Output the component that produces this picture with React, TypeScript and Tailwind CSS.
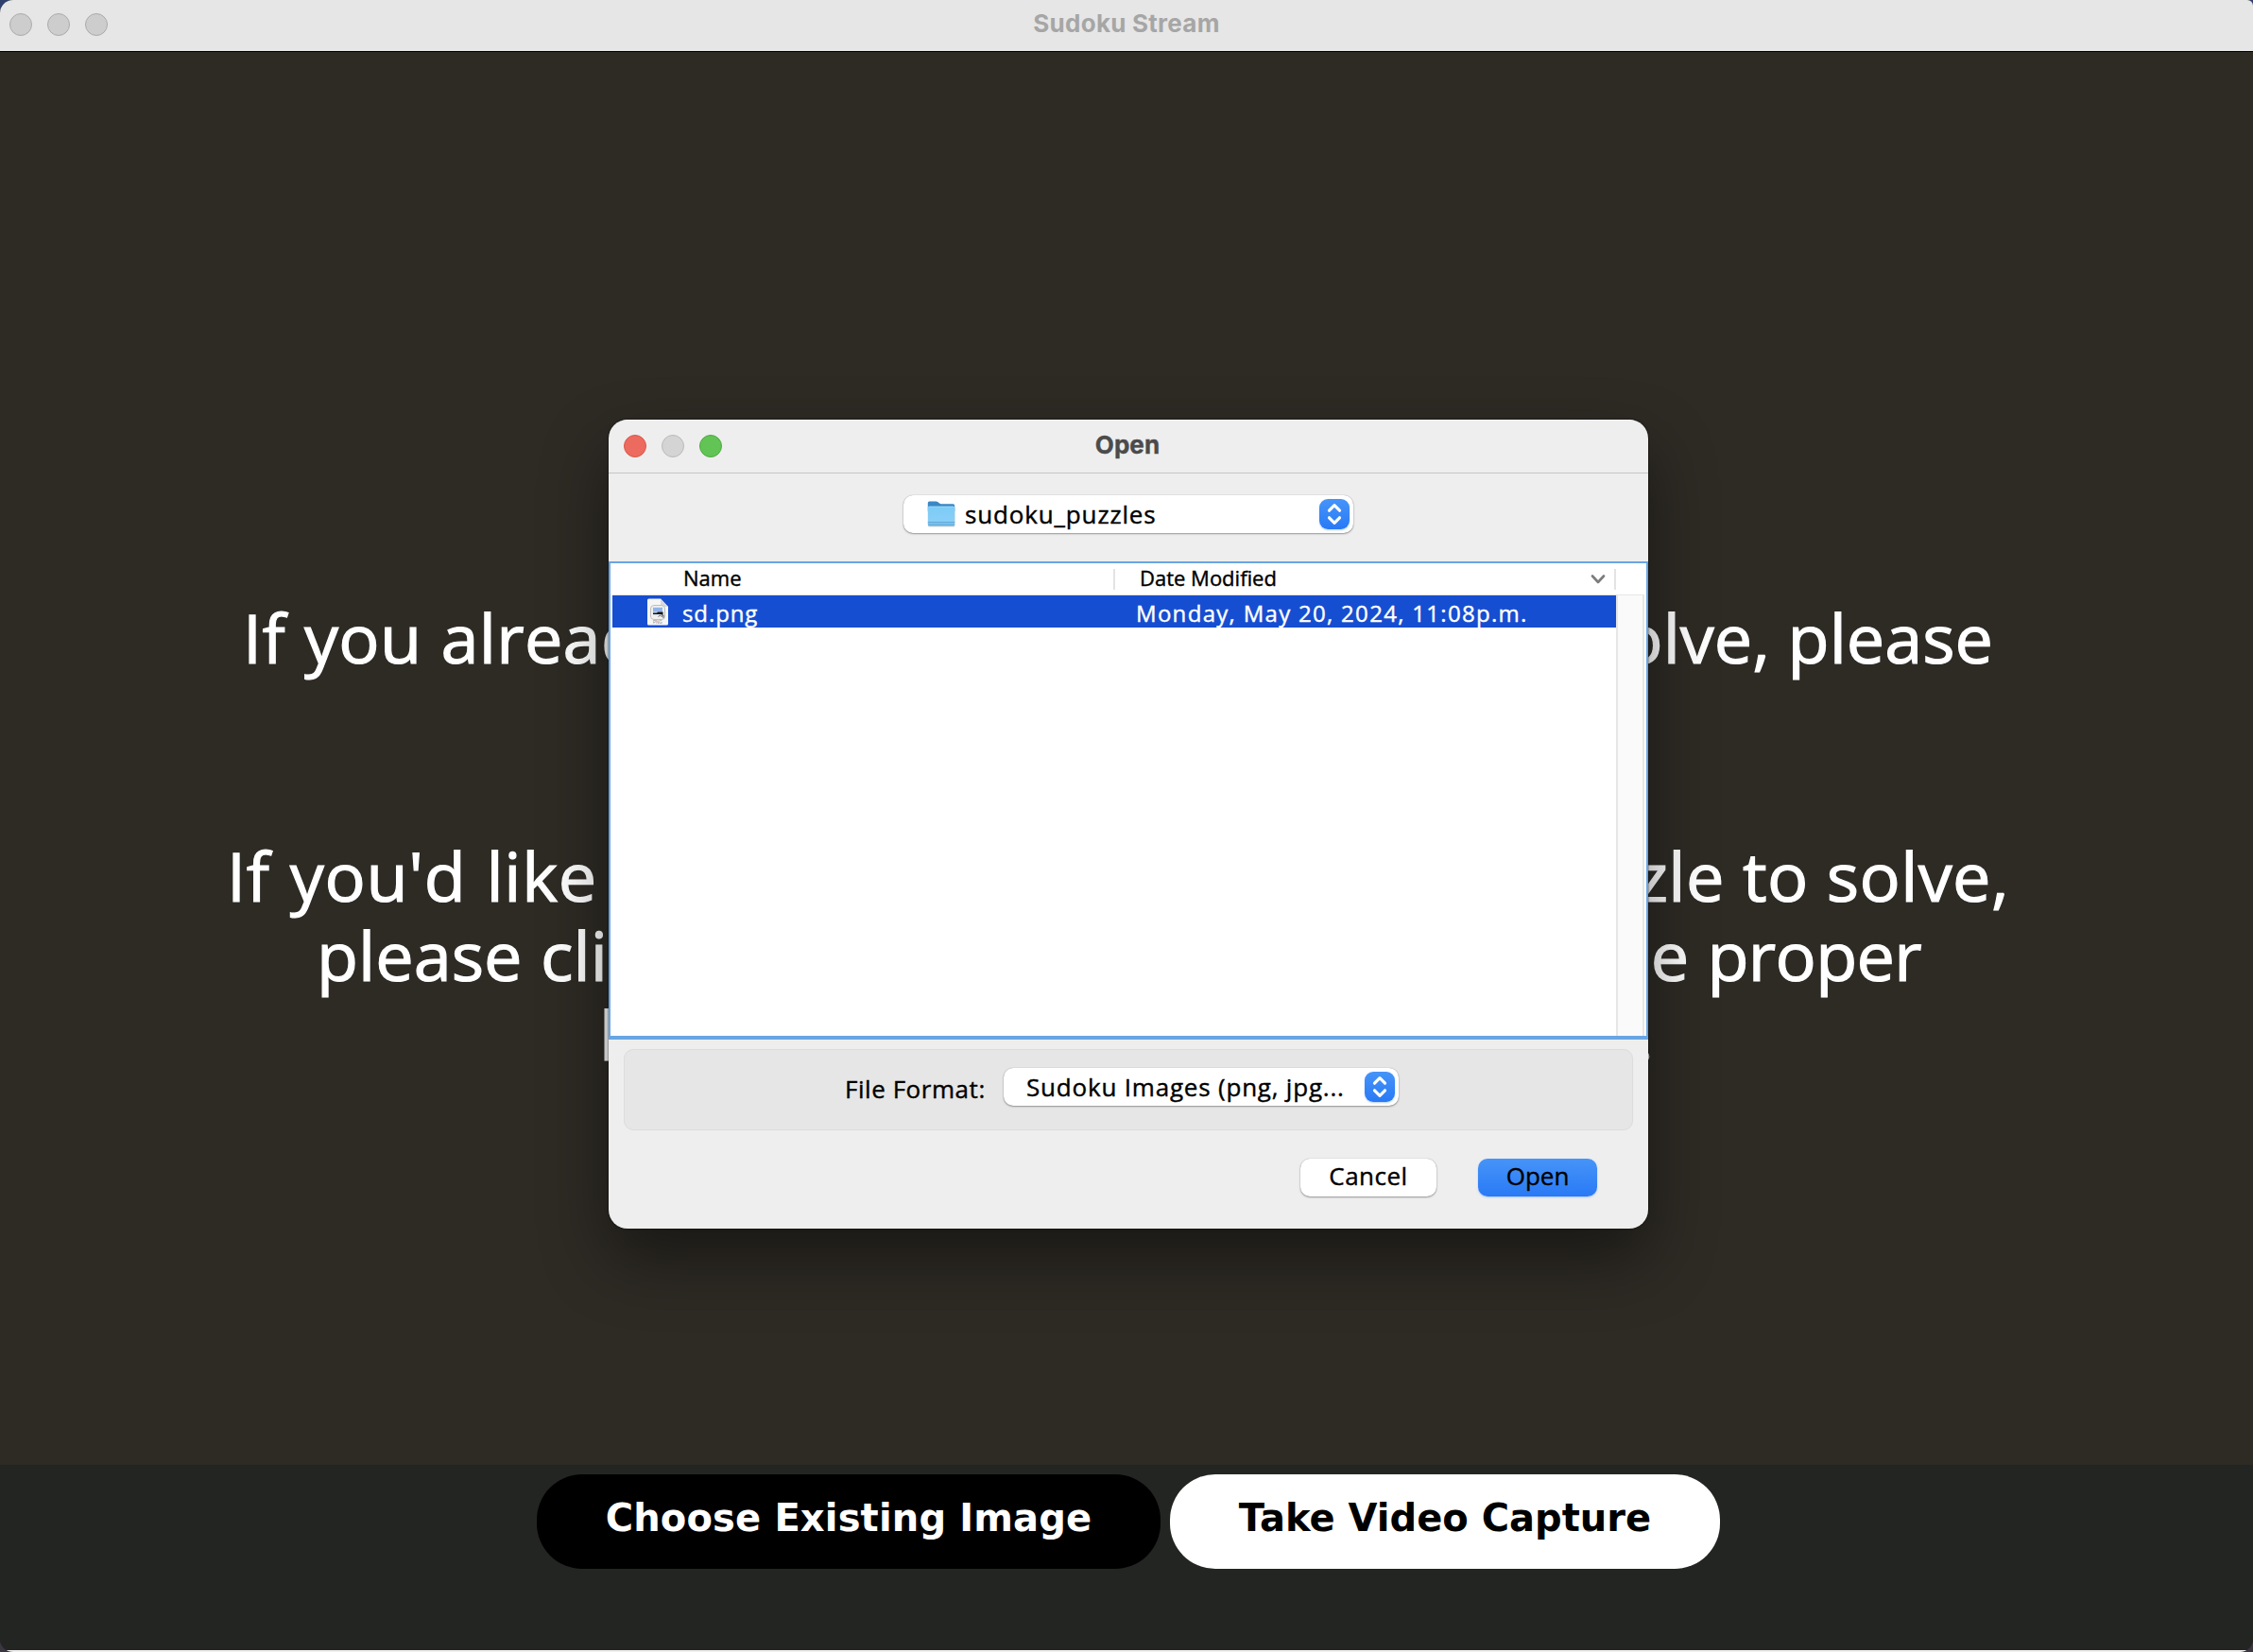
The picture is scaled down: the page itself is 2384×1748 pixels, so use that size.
function Light({ className }: { className: string }) {
  return <span className={`size-6 shrink-0 rounded-full border ${className}`} />;
}

function Knob() {
  return (
    <span className="size-8 shrink-0 rounded-[9px] bg-linear-to-b from-[#4694f8] to-[#2979f6] shadow-[0_1px_2px_rgba(41,121,246,0.35)]">
      <svg viewBox="0 0 32 32" className="size-8" fill="none" stroke="white" strokeWidth="3.2" strokeLinecap="round" strokeLinejoin="round">
        <path d="M10.5 12.2 16 6.7l5.5 5.5M10.5 19.8 16 25.3l5.5-5.5" />
      </svg>
    </span>
  );
}

function FolderIcon() {
  return (
    <svg viewBox="0 0 30 30" className="size-[30px] shrink-0">
      <defs>
        <linearGradient id="folderFront" x1="0" y1="0" x2="0" y2="1">
          <stop offset="0" stopColor="#7ccbf5" />
          <stop offset="0.8" stopColor="#88cff8" />
          <stop offset="1" stopColor="#5fa9d8" />
        </linearGradient>
      </defs>
      <rect x="1" y="8" width="28.6" height="20.6" rx="1.5" fill="#000" opacity="0.15" />
      <path d="M.8 3.2Q.8 1.4 2.4 1.4h7q1 0 1.7.6l2 1.6q.8.6 1.8.6h12.5q1.8 0 1.8 1.8V12H.8z" fill="#3a87c4" />
      <rect x=".8" y="6.8" width="28.4" height="20.6" rx="1.5" fill="url(#folderFront)" />
      <path d="M.8 23.5h28.4" stroke="#5a9fce" strokeWidth=".8" />
      <path d="M1.5 7.2h27" stroke="#9fdcfb" strokeWidth=".8" />
    </svg>
  );
}

function PngIcon() {
  return (
    <svg viewBox="0 0 24 30" className="h-[30px] w-6 shrink-0">
      <path d="M1 3q0-1.500 1.500-1.500H15l8 8.500v18q0 1.500-1.500 1.500h-19Q1 29.500 1 28z" fill="#f6f6f6" />
      <path d="M15 1.500V8.500q0 1.500 1.500 1.500H23z" fill="#d9d9d9" />
      <rect x="4.500" y="8.500" width="15" height="15" rx="3.500" fill="#f0f0f0" stroke="#b9b9b9" strokeWidth="0.9" />
      <rect x="7" y="10.8" width="10" height="8.2" fill="#8fb4e8" />
      <rect x="7" y="15.500" width="10" height="4.3" fill="#dfe6ee" />
      <path d="M7 16.500h4l1-1h5.500v3.500l-2.500-1H7z" fill="#101418" />
      <path d="M12.500 20.500l2-1.500 1.500 1.500 2-1.500v3" fill="none" stroke="#555" strokeWidth="0.9" />
      <text x="12" y="28" textAnchor="middle" fontSize="4.5" strokeWidth="0" fill="#8a8a8a" fontFamily="Liberation Sans, sans-serif">PNG</text>
    </svg>
  );
}

function Select({ className, children }: { className: string; children: React.ReactNode }) {
  return (
    <div className={`flex h-10 items-center justify-between rounded-[10px] bg-white pr-1 shadow-[0_0_1px_rgba(0,0,0,0.35),0_1px_2px_rgba(0,0,0,0.35)] ${className}`}>
      {children}
      <Knob />
    </div>
  );
}

function OpenDialog() {
  return (
    <section className="absolute left-[644px] top-[444px] flex h-[856px] w-[1100px] flex-col overflow-hidden rounded-[20px] bg-[#eeeeee] text-[26px] text-black shadow-[0_0_2px_rgba(0,0,0,0.8),0_32px_70px_rgba(0,0,0,0.45)] [-webkit-text-stroke:0.4px_currentColor]">
      <header className="grid h-14 shrink-0 grid-cols-[1fr_auto_1fr] items-center border-t border-white/80 pb-px">
        <div className="flex gap-4 pl-4">
          <Light className="border-[#d9574c] bg-[#ed6a5e]" />
          <Light className="border-[#b9b9b9] bg-[#d4d4d4]" />
          <Light className="border-[#51a843] bg-[#61c454]" />
        </div>
        <h2 className="pb-[3px] pr-[2px] font-['Inter',sans-serif] text-[26px] font-bold tracking-[0.1px] text-[#4b4b4b]">Open</h2>
      </header>
      <div className="flex h-[94px] shrink-0 justify-center border-t border-[#c6c6c6] pt-[23px]">
        <Select className="w-[476px] pl-[25px]">
          <span className="flex items-center gap-2.5">
            <FolderIcon />
            <span className="font-medium tracking-[0.85px]">sudoku_puzzles</span>
          </span>
        </Select>
      </div>
      <div className="flex h-[506px] shrink-0 flex-col border-2 border-b-4 border-[#69a5e3] bg-white">
        <div className="flex h-[33px] shrink-0 items-center pb-[3px] text-[22px] font-medium leading-7">
          <span className="w-[532px] pl-[77px]">Name</span>
          <span className="mt-[3px] h-[22px] w-[2px] bg-[#e3e3e3]" />
          <span className="flex h-7 flex-1 items-center justify-between pl-[26px] pr-[9px]">
            Date Modified
            <svg viewBox="0 0 16 10" className="mt-[3px] h-[10px] w-4" fill="none" stroke="#7c7c7c" strokeWidth="2.6" strokeLinecap="round" strokeLinejoin="round">
              <path d="M2 1.500 8 8l6-6.500" />
            </svg>
          </span>
          <span className="mt-[3px] mr-[32px] h-[22px] w-[2px] bg-[#e3e3e3]" />
        </div>
        <div className="flex flex-1">
          <div className="flex-1 pl-[2px]">
            <div className="h-px bg-[#e3e3e3]" />
            <div className="flex h-[34px] items-center bg-[#164ed1] text-2xl font-medium text-white">
              <span className="flex w-[554px] items-center gap-3.5 pl-9">
                <PngIcon />
                <span className="pt-[3px] tracking-[0.9px]">sd.png</span>
              </span>
              <span className="pt-[3px] tracking-[1.3px]">Monday, May 20, 2024, 11:08p.m.</span>
            </div>
          </div>
          <div className="mr-[2px] w-[30px] border-x-2 border-t border-[#e6e6e6] bg-[#fafafa]" />
        </div>
      </div>
      <div className="mx-4 mt-2.5 flex h-[86px] shrink-0 items-start rounded-[10px] border border-[#dcdcdc] bg-[#e6e6e6] pl-[233px] pt-[19px] font-medium">
        <span className="w-[168px] pt-0.5 leading-10 tracking-[0.55px]">File Format:</span>
        <Select className="w-[418px] pl-6">
          <span className="tracking-[0.8px]">Sudoku Images (png, jpg...</span>
        </Select>
      </div>
      <div className="flex justify-end gap-11 pr-[54px] pt-[30px] font-medium">
        <button className="h-10 w-36 rounded-[10px] bg-white pb-1 leading-9 tracking-[0.5px] shadow-[0_0_1px_rgba(0,0,0,0.35),0_1px_2px_rgba(0,0,0,0.35)]">Cancel</button>
        <button className="h-10 w-[126px] rounded-[10px] bg-linear-to-b from-[#4694f8] to-[#2979f6] pb-1 leading-9 shadow-[0_1px_2px_rgba(41,121,246,0.35)]">Open</button>
      </div>
    </section>
  );
}

export default function App() {
  return (
    <div className="h-[1748px] w-[2384px] bg-linear-to-b from-[#2f3f6c] to-[#3b3640] font-['Open_Sans',sans-serif]">
      <div className="relative flex h-full flex-col overflow-hidden rounded-[14px] rounded-tr-[6px] bg-[#2e2b25]">
        <header className="grid h-[55px] shrink-0 grid-cols-[1fr_auto_1fr] items-center border-b border-black bg-[#e6e6e6] pb-0.5">
          <div className="flex gap-4 pl-2.5">
            <Light className="border-[#ababab] bg-[#cdcdcd]" />
            <Light className="border-[#ababab] bg-[#cdcdcd]" />
            <Light className="border-[#ababab] bg-[#cdcdcd]" />
          </div>
          <h1 className="pb-[3px] font-['Inter',sans-serif] text-[26px] font-bold tracking-[0.25px] text-[#a6a6a6]">Sudoku Stream</h1>
        </header>
        <main className="flex-1 pt-[577px] text-[72px] font-medium leading-[84px] text-white [-webkit-text-stroke:1.2px_white]">
          <p className="flex justify-between pl-[257px] pr-[275px]">
            <span className="tracking-[0.3px] [word-spacing:1px]">If you already</span>
            <span>to solve, please</span>
          </p>
          <p className="mt-[168px] flex justify-between pl-[240px] pr-[258px]">
            <span className="tracking-[0.7px] [word-spacing:1.5px]">If you'd like</span>
            <span className="tracking-[0.4px]">puzzle to solve,</span>
          </p>
          <p className="flex justify-between pl-[335px] pr-[351px]">
            <span className="[word-spacing:1px]">please click</span>
            <span className="tracking-[-0.7px] [word-spacing:2px]">the proper</span>
          </p>
          <p className="flex justify-between pl-[634px] pr-[634px]">
            <span>lighting</span>
            <span>.</span>
          </p>
        </main>
        <footer className="flex h-[196px] shrink-0 justify-center gap-2.5 bg-[#232522] pl-1 pt-2.5 font-['DejaVu_Sans',sans-serif] text-[40px] font-bold">
          <button className="h-[100px] w-[660px] rounded-[48px] bg-black pb-2 tracking-[0.15px] text-white">Choose Existing Image</button>
          <button className="h-[100px] w-[582px] rounded-[48px] bg-white pb-2 text-black">Take Video Capture</button>
        </footer>
        <div className="h-0.5 shrink-0 bg-[#f0eeee]" />
        <OpenDialog />
      </div>
    </div>
  );
}
